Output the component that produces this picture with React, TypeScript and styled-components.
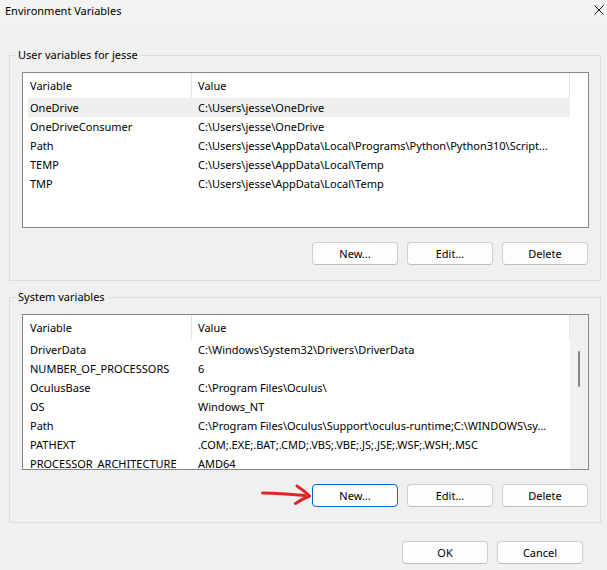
import styled, { createGlobalStyle } from "styled-components";

const GlobalStyle = createGlobalStyle`
  html, body {
    margin: 0;
    padding: 0;
    background: #f0f0f0;
  }
  body {
    font-family: "Noto Sans", "Liberation Sans", sans-serif;
    font-size: 11px;
    color: #000000;
  }
  * {
    box-sizing: border-box;
  }
`;

const Window = styled.div`
  width: 607px;
  height: 570px;
  display: flex;
  flex-direction: column;
  background: #f0f0f0;
  overflow: hidden;
`;

const TitleBar = styled.div`
  height: 25px;
  flex-shrink: 0;
  display: flex;
  justify-content: space-between;
  align-items: flex-start;
  padding: 3px 3px 0 5px;
  line-height: 15px;
  background: #f3f3f3;
`;

const CloseIcon = styled.svg`
  margin-top: 2px;
  display: block;
`;

const Content = styled.div`
  display: flex;
  flex-direction: column;
  padding-top: 22px;
`;

const GroupBox = styled.fieldset`
  width: 592px;
  min-width: 0;
  margin: 0 0 0 9px;
  padding: 0;
  border: 1px solid #dcdcdc;
  & + & {
    margin-top: 8px;
  }
`;

const GroupLabel = styled.legend`
  margin-left: 6px;
  padding: 0 2px;
  line-height: 16px;
`;

const GroupBody = styled.div`
  display: flex;
  flex-direction: column;
  gap: 14px;
  padding: 9px 11px 15px 12px;
`;

const ListView = styled.div`
  height: 156px;
  display: flex;
  border: 1px solid #828790;
  background: #ffffff;
  overflow: hidden;
`;

const ListBody = styled.div`
  flex: 1;
  min-width: 0;
  display: flex;
  flex-direction: column;
`;

const HeaderRow = styled.div`
  height: 25px;
  flex-shrink: 0;
  display: grid;
  grid-template-columns: 169px 378px;
`;

const HeaderCell = styled.div<{ $indent: number }>`
  display: flex;
  align-items: center;
  padding-left: ${(p) => p.$indent}px;
  border-right: 1px solid #e5e5e5;
`;

const Row = styled.div<{ $selected?: boolean }>`
  height: 19px;
  flex-shrink: 0;
  margin-left: 5px;
  display: grid;
  grid-template-columns: 164px 378px;
  align-items: center;
  background: ${(p) => (p.$selected ? "#efefef" : "transparent")};
`;

const Cell = styled.div<{ $indent: number }>`
  padding-left: ${(p) => p.$indent}px;
  line-height: 19px;
  white-space: nowrap;
  overflow: hidden;
`;

const ScrollTrack = styled.div<{ $active?: boolean }>`
  width: 18px;
  flex-shrink: 0;
  display: flex;
  justify-content: center;
  padding-top: 36px;
  background: ${(p) => (p.$active ? "#f0f0f0" : "#ffffff")};
`;

const ScrollThumb = styled.div`
  width: 2px;
  height: 36px;
  border-radius: 1px;
  background: #858585;
`;

const ButtonRow = styled.div`
  display: flex;
  justify-content: flex-end;
  align-items: center;
  gap: 9px;
  padding-right: 1px;
`;

const Button = styled.button<{ $focused?: boolean }>`
  width: 86px;
  height: 23px;
  padding: 0;
  font: inherit;
  color: #000000;
  background: #fdfdfd;
  border: 1px solid ${(p) => (p.$focused ? "#0067c0" : "#d0d0d0")};
  border-bottom-color: ${(p) => (p.$focused ? "#0067c0" : "#bebebe")};
  border-radius: 4px;
`;

const ArrowMark = styled.svg`
  flex-shrink: 0;
  margin-right: -8px;
  display: block;
`;

const Footer = styled.div`
  display: flex;
  justify-content: flex-end;
  gap: 9px;
  padding-right: 24px;
  margin-top: 18px;
`;

type Variable = [string, string];

const userVariables: Variable[] = [
  ["OneDrive", "C:\\Users\\jesse\\OneDrive"],
  ["OneDriveConsumer", "C:\\Users\\jesse\\OneDrive"],
  ["Path", "C:\\Users\\jesse\\AppData\\Local\\Programs\\Python\\Python310\\Script..."],
  ["TEMP", "C:\\Users\\jesse\\AppData\\Local\\Temp"],
  ["TMP", "C:\\Users\\jesse\\AppData\\Local\\Temp"],
];

const systemVariables: Variable[] = [
  ["DriverData", "C:\\Windows\\System32\\Drivers\\DriverData"],
  ["NUMBER_OF_PROCESSORS", "6"],
  ["OculusBase", "C:\\Program Files\\Oculus\\"],
  ["OS", "Windows_NT"],
  ["Path", "C:\\Program Files\\Oculus\\Support\\oculus-runtime;C:\\WINDOWS\\sy..."],
  ["PATHEXT", ".COM;.EXE;.BAT;.CMD;.VBS;.VBE;.JS;.JSE;.WSF;.WSH;.MSC"],
  ["PROCESSOR_ARCHITECTURE", "AMD64"],
];

type ListProps = {
  rows: Variable[];
  selected?: number;
  scrollable?: boolean;
};

const VariableList: React.FC<ListProps> = ({ rows, selected, scrollable }) => {
  return (
    <ListView>
      <ListBody>
        <HeaderRow>
          <HeaderCell $indent={7}>Variable</HeaderCell>
          <HeaderCell $indent={6}>Value</HeaderCell>
        </HeaderRow>
        {rows.map(([name, value], i) => (
          <Row key={name + i} $selected={i === selected}>
            <Cell $indent={2}>{name}</Cell>
            <Cell $indent={6}>{value}</Cell>
          </Row>
        ))}
      </ListBody>
      <ScrollTrack $active={scrollable}>{scrollable && <ScrollThumb />}</ScrollTrack>
    </ListView>
  );
};

const App: React.FC = () => {
  return (
    <>
      <GlobalStyle />
      <Window>
        <TitleBar>
          <span>Environment Variables</span>
          <CloseIcon width="10" height="10" viewBox="0 0 10 10">
            <path d="M0.5 0.5 L9.5 9.5 M9.5 0.5 L0.5 9.5" stroke="#1a1a1a" strokeWidth="1" />
          </CloseIcon>
        </TitleBar>
        <Content>
          <GroupBox>
            <GroupLabel>User variables for jesse</GroupLabel>
            <GroupBody>
              <VariableList rows={userVariables} selected={0} />
              <ButtonRow>
                <Button>New...</Button>
                <Button>Edit...</Button>
                <Button>Delete</Button>
              </ButtonRow>
            </GroupBody>
          </GroupBox>
          <GroupBox>
            <GroupLabel>System variables</GroupLabel>
            <GroupBody>
              <VariableList rows={systemVariables} scrollable />
              <ButtonRow>
                <ArrowMark width="50" height="23" viewBox="0 0 50 23">
                  <path
                    d="M1.5 9 Q18 9.2 44 11.4"
                    fill="none"
                    stroke="#e0262b"
                    strokeWidth="3"
                    strokeLinecap="round"
                  />
                  <path
                    d="M36 2 Q43 6.5 48.5 12 Q41 15 34.5 19.5"
                    fill="none"
                    stroke="#e0262b"
                    strokeWidth="3"
                    strokeLinecap="round"
                    strokeLinejoin="round"
                  />
                </ArrowMark>
                <Button $focused>New...</Button>
                <Button>Edit...</Button>
                <Button>Delete</Button>
              </ButtonRow>
            </GroupBody>
          </GroupBox>
          <Footer>
            <Button>OK</Button>
            <Button>Cancel</Button>
          </Footer>
        </Content>
      </Window>
    </>
  );
};

export default App;
